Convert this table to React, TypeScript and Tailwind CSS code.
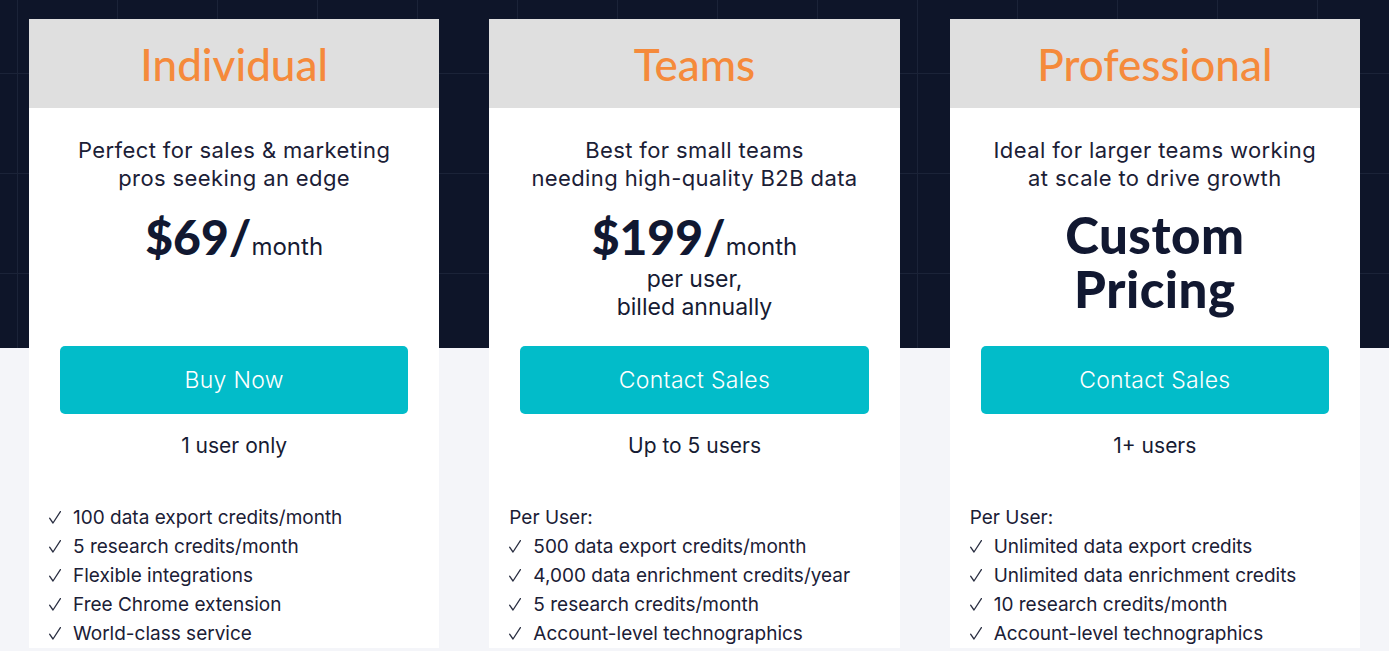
import React from "react"

const plans = [
  {
    name: "Individual",
    tagline: ["Perfect for sales & marketing", "pros seeking an edge"],
    price: "$69/",
    extra: [] as string[],
    custom: false,
    cta: "Buy Now",
    users: "1 user only",
    perUser: false,
    features: [
      "100 data export credits/month",
      "5 research credits/month",
      "Flexible integrations",
      "Free Chrome extension",
      "World-class service",
    ],
  },
  {
    name: "Teams",
    tagline: ["Best for small teams", "needing high-quality B2B data"],
    price: "$199/",
    extra: ["per user,", "billed annually"],
    custom: false,
    cta: "Contact Sales",
    users: "Up to 5 users",
    perUser: true,
    features: [
      "500 data export credits/month",
      "4,000 data enrichment credits/year",
      "5 research credits/month",
      "Account-level technographics",
    ],
  },
  {
    name: "Professional",
    tagline: ["Ideal for larger teams working", "at scale to drive growth"],
    price: "",
    extra: [] as string[],
    custom: true,
    cta: "Contact Sales",
    users: "1+ users",
    perUser: true,
    features: [
      "Unlimited data export credits",
      "Unlimited data enrichment credits",
      "10 research credits/month",
      "Account-level technographics",
    ],
  },
]

const Check = () => (
  <svg width="12" height="13" viewBox="0 0 12 13" className="mr-[12px] shrink-0" fill="none">
    <path d="M0.6 7.2 L4 12 L11.4 0.6" stroke="#2a2f42" strokeWidth="1.3" strokeLinecap="round" strokeLinejoin="round" />
  </svg>
)

const App = () => {
  return (
    <div className="min-h-screen bg-[#f4f5f9] font-['Inter','Liberation_Sans',sans-serif] text-[#161b33]">
      {/* dark hero band with faint grid */}
      <div className="h-[348px] bg-[#0e1529] bg-[linear-gradient(to_right,#1b2338_1px,transparent_1px),linear-gradient(to_bottom,#1b2338_1px,transparent_1px)] [background-size:100px_100px] [background-position:17px_73px]" />
      <div className="mx-auto -mt-[329px] grid w-[1331px] grid-cols-3 gap-[50px] pb-10">
        {plans.map((plan, idx) => {
          return (
            <div key={idx} className="flex flex-col bg-white">
              <div className="flex h-[89px] items-center justify-center bg-[#dfdfdf]">
                <h2 className="font-['Lato',sans-serif] text-[44px] font-medium leading-none text-[#f58a3b]">
                  {plan.name}
                </h2>
              </div>
              <div className="flex h-[238px] flex-col items-center pt-[28px] text-center">
                <p className="text-[22px] leading-[28px] tracking-[0.4px] text-[#1b2036]">
                  {plan.tagline[0]}
                  <br />
                  {plan.tagline[1]}
                </p>
                {plan.custom ? (
                  <p className="mt-[16px] font-['Lato',sans-serif] text-[51px] font-black leading-[54px] tracking-[0.5px] text-[#111831]">
                    Custom
                    <br />
                    Pricing
                  </p>
                ) : (
                  <div className="mt-[21px] flex flex-col items-center">
                    <div className="flex items-baseline">
                      <span className="font-['Lato',sans-serif] text-[48px] font-black leading-none text-[#111831]">
                        {plan.price}
                      </span>
                      <span className="text-[24px] leading-none">month</span>
                    </div>
                    {plan.extra.length > 0 && (
                      <p className="mt-[4px] text-[23px] leading-[28px]">
                        {plan.extra[0]}
                        <br />
                        {plan.extra[1]}
                      </p>
                    )}
                  </div>
                )}
              </div>
              <button className="mx-[31px] flex h-[68px] items-center justify-center rounded-[5px] bg-[#02bcc9] text-[23px] font-light tracking-[0.3px] text-white">
                {plan.cta}
              </button>
              <p className="mt-[18px] text-center text-[21px] leading-[28px]">{plan.users}</p>
              <ul className="mt-[43px] flex flex-col pl-[20px] text-[19px] leading-[29px] text-[#1b2036]">
                {plan.perUser && <li>Per User:</li>}
                {plan.features.map((f, i) => (
                  <li key={i} className="flex items-center">
                    <Check />
                    {f}
                  </li>
                ))}
              </ul>
            </div>
          )
        })}
      </div>
    </div>
  )
}

export default App
